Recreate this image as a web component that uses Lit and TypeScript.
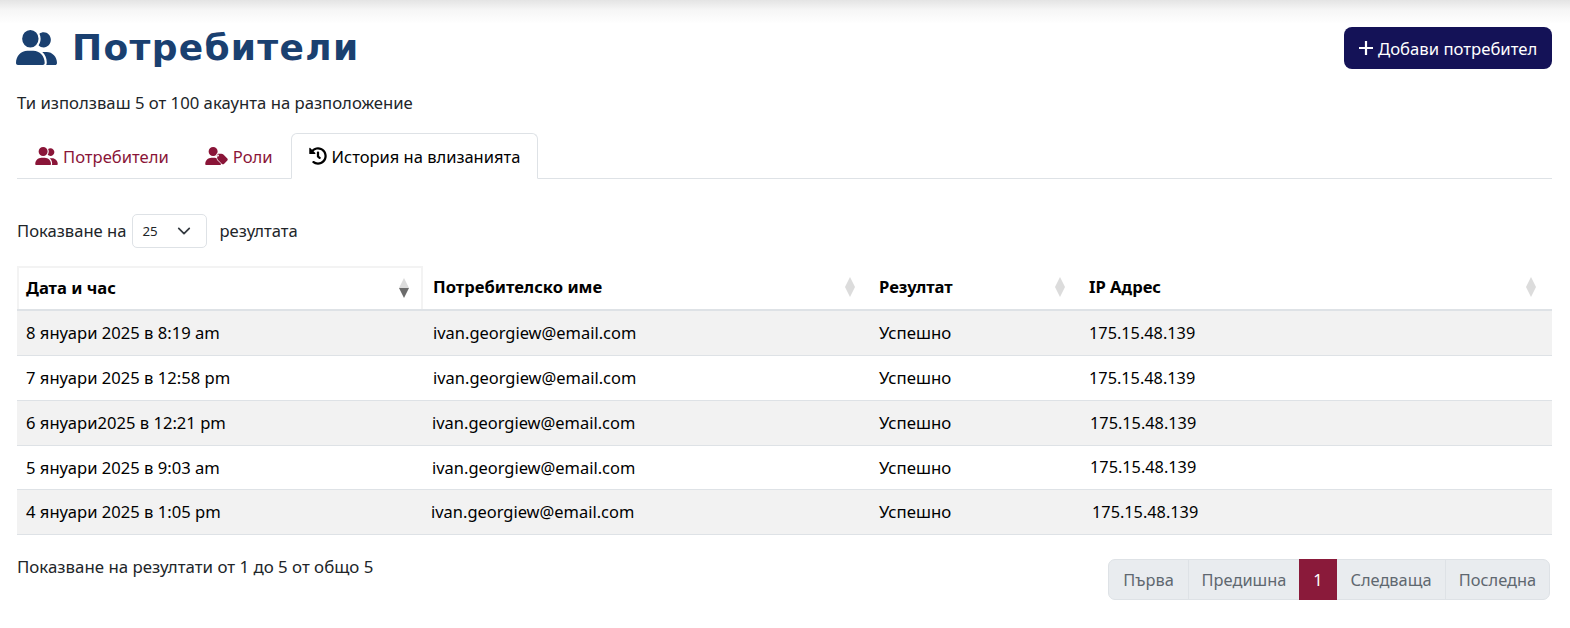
import { LitElement, html, css, svg } from "lit";
import { customElement } from "lit/decorators.js";

const group = svg`<path d="M96 128a128 128 0 1 1 256 0A128 128 0 1 1 96 128zM0 482.300C0 383.800 79.800 304 178.300 304h91.400C368.200 304 448 383.800 448 482.300c0 16.400-13.300 29.700-29.700 29.700H29.700C13.300 512 0 498.700 0 482.300zM609.300 512H471.400c5.400-9.400 8.600-20.300 8.600-32v-8c0-60.700-27.100-115.200-69.800-151.800c2.400-.1 4.700-.2 7.100-.2h61.400C567.800 320 640 392.200 640 481.300c0 17-13.800 30.700-30.700 30.700zM432 256c-31 0-59-12.600-79.300-32.900C372.400 196.500 384 163.600 384 128c0-26.800-6.600-52.100-18.300-74.300C384.300 40.100 407.200 32 432 32c61.900 0 112 50.100 112 112s-50.100 112-112 112z"/>`;
const userTag = svg`<path d="M96 128a128 128 0 1 1 256 0A128 128 0 1 1 96 128zM0 482.300C0 383.800 79.800 304 178.300 304h91.400C368.200 304 448 383.800 448 482.300c0 16.400-13.300 29.700-29.700 29.700H29.700C13.300 512 0 498.700 0 482.300z"/><path transform="translate(640 512) scale(1.25) translate(-640 -512)" stroke="#fff" stroke-width="30" paint-order="stroke" d="M630.600 364.900l-90.300-90.200c-12-12-28.300-18.700-45.300-18.700h-79.300c-8.800 0-16 7.200-16 16v79.200c0 17 6.700 33.200 18.700 45.200l90.300 90.200c12.500 12.500 32.800 12.500 45.300 0l76.600-76.600c12.500-12.400 12.500-32.700 0-45.100zm-216.100-45.700c-13.300 0-24-10.700-24-24s10.700-24 24-24 24 10.700 24 24c0 13.200-10.700 24-24 24z"/>`;
const history = svg`<path d="M504 255.531c.253 136.64-111.18 248.372-247.82 248.468-59.015.042-113.223-20.53-155.822-54.911-11.077-8.94-11.905-25.541-1.839-35.607l11.267-11.267c8.609-8.609 22.353-9.551 31.891-1.984C173.062 425.135 212.781 440 256 440c101.705 0 184-82.311 184-184 0-101.705-82.311-184-184-184-48.814 0-93.149 18.969-126.068 49.932l50.754 50.754c10.08 10.08 2.941 27.314-11.313 27.314H24c-8.837 0-16-7.163-16-16V38.627c0-14.254 17.234-21.393 27.314-11.314l49.372 49.372C129.209 34.136 189.552 8 256 8c136.81 0 247.747 110.78 248 247.531zm-180.912 78.784l9.823-12.63c8.138-10.463 6.253-25.542-4.21-33.679L288 256.349V152c0-13.255-10.745-24-24-24h-16c-13.255 0-24 10.745-24 24v135.651l65.409 50.874c10.463 8.137 25.541 6.253 33.679-4.21z"/>`;

const rows = [
  { cols: [407, 446, 210], cells: ["8 януари 2025 в 8:19 am", "ivan.georgiew@email.com", "Успешно", "175.15.48.139"] },
  { cols: [407, 446, 210], cells: ["7 януари 2025 в 12:58 pm", "ivan.georgiew@email.com", "Успешно", "175.15.48.139"] },
  { cols: [406, 447, 211], cells: ["6 януари2025 в 12:21 pm", "ivan.georgiew@email.com", "Успешно", "175.15.48.139"] },
  { cols: [406, 447, 211], cells: ["5 януари 2025 в 9:03 am", "ivan.georgiew@email.com", "Успешно", "175.15.48.139"] },
  { cols: [405, 448, 213], cells: ["4 януари 2025 в 1:05 pm", "ivan.georgiew@email.com", "Успешно", "175.15.48.139"] },
];
const heads = ["Дата и час", "Потребителско име", "Резултат", "IP Адрес"];

@customElement("app-root")
export class AppRoot extends LitElement {
  static styles = css`
    :host {
      display: block;
      height: 628px;
      box-sizing: border-box;
      padding: 27px 18px 0 17px;
      font-family: "Noto Sans", "Open Sans", sans-serif;
      font-size: 16.6px;
      color: #212529;
      background: linear-gradient(#e4e4e4 0, #f6f6f6 10px, #fff 24px) no-repeat top / 100% 24px;
    }
    svg { display: block; fill: currentColor; }
    .top { display: flex; justify-content: space-between; align-items: flex-start; height: 42px; }
    .title {
      display: flex; align-items: center; gap: 15px; margin: 0 0 0 -1px;
      font: 700 36px/42px "DejaVu Sans", sans-serif; letter-spacing: 1.300px; color: #1a4070;
    }
    .title svg { width: 41px; height: 35px; margin-top: -2px; }
    .add {
      display: flex; align-items: center; gap: 4px; height: 42px; width: 208px; box-sizing: border-box;
      padding: 0 0 0 14px; border: 0; border-radius: 8px; background: #141257; color: #fff;
      font: inherit; font-size: 16.7px;
    }
    .add svg { width: 16px; height: 16px; }
    .sub { margin: 23px 0 0; line-height: 22px; font-size: 16.72px; }
    .tabs { display: flex; margin-top: 19px; height: 46px; box-sizing: border-box; border-bottom: 1px solid #dee2e6; }
    .tab {
      display: flex; align-items: center; gap: 5px; box-sizing: border-box; height: 46px;
      padding: 0 17px; color: #8a1538; border: 1px solid transparent; border-radius: 6px 6px 0 0;
    }
    .tab svg { height: 18px; width: 23px; }
    .tab.active { color: #000; background: #fff; border-color: #dee2e6 #dee2e6 #fff; gap: 5px; font-size: 16.5px; }
    .tab.active svg { width: 18px; height: 18px; }
    .length { display: flex; align-items: center; box-sizing: border-box; margin-top: 35px; height: 34px; padding-bottom: 2px; }
    .select {
      display: flex; align-items: center; justify-content: space-between; box-sizing: border-box;
      width: 75px; height: 34px; margin: 0 12px -2px 6px; padding: 0 15px 0 9px;
      border: 1px solid #dee2e6; border-radius: 5px; font-size: 13.3px;
    }
    .select svg { width: 14px; height: 14px; fill: none; stroke: #343a40; stroke-width: 2; stroke-linecap: round; stroke-linejoin: round; }
    .table { margin-top: 18px; color: #000; }
    .row {
      display: grid; height: 45px; box-sizing: border-box; align-items: center;
      border-bottom: 1px solid #dee2e6; padding-bottom: 1px;
    }
    .row.odd { background: #f2f2f2; }
    .row.short { height: 44px; }
    .cell { padding-left: 9px; white-space: nowrap; }
    .cell:nth-child(2) { font-size: 16.45px; }
    .cell:nth-child(3) { font-size: 16.8px; }
    .cell:nth-child(4) { font-size: 16.3px; }
    .head {
      display: grid; grid-template-columns: 407px 446px 210px 1fr; height: 45px; box-sizing: border-box;
      border-bottom: 2px solid #dee2e6;
    }
    .th {
      display: flex; align-items: center; justify-content: space-between; padding: 0 14px 2px 9px;
      font-weight: 700; box-sizing: border-box;
    }
    .th:last-child { padding-right: 15px; }
    .th.sorted { border: 2px solid #f3f3f3; border-bottom: 0; padding: 0 11px 2px 7px; margin-right: 1px; }
    .sort { width: 12px; height: 20px; fill: #dcdcdc; }
    .sorted .sort .dn { fill: #6b6b6b; }
    .foot { display: flex; justify-content: space-between; align-items: flex-start; }
    .info { margin-top: 21px; line-height: 22px; font-size: 16.85px; }
    .pager {
      display: flex; margin: 24px 2px 0 0; height: 41px; box-sizing: border-box; background: #e9ecef;
      border: 1px solid #dee2e6; border-radius: 7px; color: #5f6870; font-size: 16.4px;
    }
    .pager span { display: flex; align-items: center; justify-content: center; box-sizing: border-box; border-left: 1px solid #dee2e6; }
    .pager span:first-child { border-left: 0; }
    .pager .cur { background: #8a1a3a; color: #fff; height: 41px; margin-top: -1px; border: 0; }
    .pager .cur + span { border-left: 0; }
  `;

  render() {
    const pages: [string, number, boolean][] = [
      ["Първа", 79, false], ["Предишна", 111, false], ["1", 38, true], ["Следваща", 108, false], ["Последна", 104, false],
    ];
    return html`
      <div class="top">
        <h1 class="title">
          <svg viewBox="0 0 640 512" preserveAspectRatio="none">${group}</svg>
          Потребители
        </h1>
        <button class="add">
          <svg viewBox="0 0 16 16"><path d="M8 1v14M1 8h14" stroke="currentColor" stroke-width="2.200" /></svg>
          Добави потребител
        </button>
      </div>
      <p class="sub">Ти използваш 5 от 100 акаунта на разположение</p>
      <div class="tabs">
        <div class="tab"><svg viewBox="0 0 640 512">${group}</svg>Потребители</div>
        <div class="tab"><svg viewBox="0 0 640 512">${userTag}</svg>Роли</div>
        <div class="tab active"><svg viewBox="0 0 512 512">${history}</svg>История на влизанията</div>
      </div>
      <div class="length">
        Показване на
        <div class="select">25<svg viewBox="0 0 16 16"><path d="M2 5l6 6 6-6" /></svg></div>
        резултата
      </div>
      <div class="table">
        <div class="head">
          ${heads.map((h, i) => html`
            <div class="th ${i === 0 ? "sorted" : ""}">${h}
              <svg class="sort" viewBox="0 0 12 20"><path d="M6 0l5 10H1z" /><path class="dn" d="M1 10h10l-5 10z" /></svg>
            </div>`)}
        </div>
        ${rows.map((r, i) => html`
          <div class="row ${i % 2 === 0 ? "odd" : ""} ${i === 3 ? "short" : ""}"
               style="grid-template-columns:${r.cols.map((c) => c + "px").join(" ")} 1fr">
            ${r.cells.map((c) => html`<div class="cell">${c}</div>`)}
          </div>`)}
      </div>
      <div class="foot">
        <div class="info">Показване на резултати от 1 до 5 от общо 5</div>
        <div class="pager">
          ${pages.map(([t, w, cur]) => html`<span class=${cur ? "cur" : ""} style="width:${w}px">${t}</span>`)}
        </div>
      </div>
    `;
  }
}
